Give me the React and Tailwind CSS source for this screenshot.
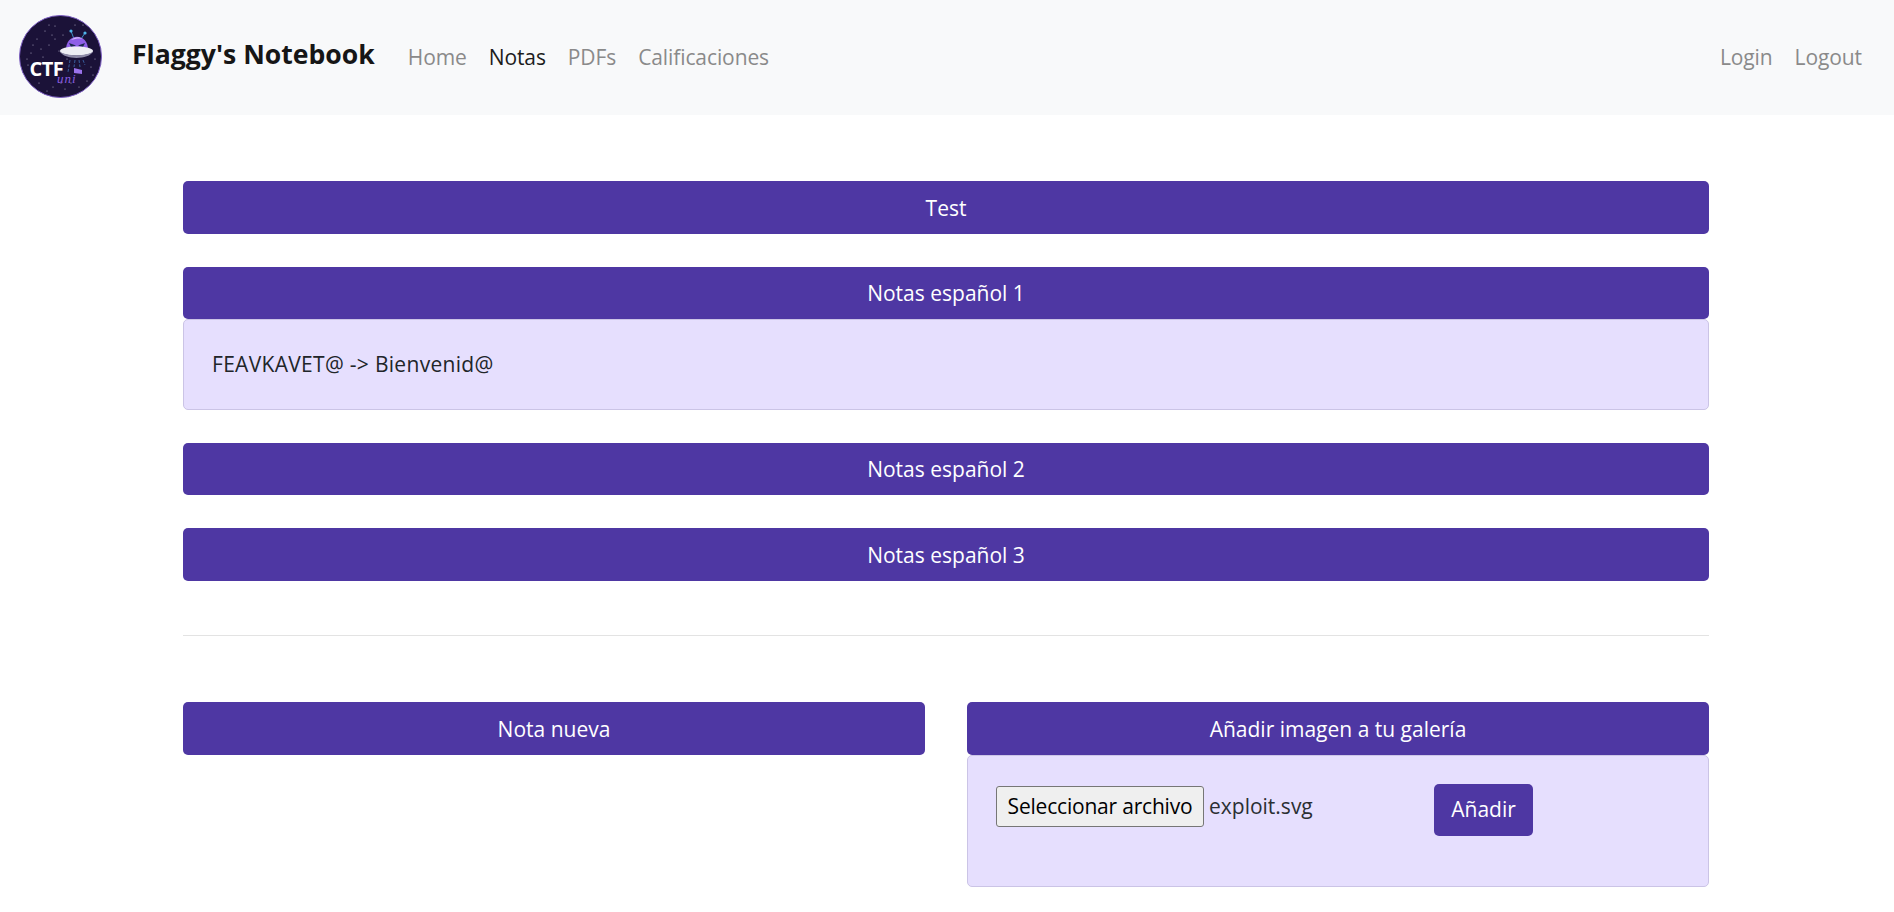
import React from 'react'

const FONT = "font-['Open_Sans','Liberation_Sans',sans-serif]"

// Dotted night sky for the logo
const STARS = [
  [18, 24], [26, 16], [36, 11], [44, 20], [12, 38], [30, 30], [40, 36], [56, 10], [9, 50], [24, 42],
  [36, 24], [20, 68], [72, 52], [68, 66], [33, 20], [60, 72], [46, 74], [34, 72], [76, 44], [28, 76],
  [14, 30], [22, 34], [48, 44], [16, 60], [42, 68], [52, 68], [74, 60], [64, 10], [8, 44], [30, 10],
]

function Logo() {
  return (
    <svg width="83" height="83" viewBox="0 0 83 83" className="shrink-0 mb-[3px]">
      <circle cx="41.5" cy="41.5" r="41" fill="#1b1238" stroke="#7a5cc0" strokeWidth="1" />
      {STARS.map(([x, y]) => (
        <circle key={`${x}-${y}`} cx={x} cy={y} r="0.5" fill="#c9c4e0" />
      ))}
      <path d="M55 24 L52 16 M62 24 L66 18" stroke="#3f8fc4" strokeWidth="1" />
      <circle cx="52" cy="16" r="1.6" fill="#4fb4e8" />
      <circle cx="66" cy="18" r="1.6" fill="#4fb4e8" />
      <path d="M47 36 C46 17 70 17 69 36 Z" fill="#8f5fe8" />
      <path d="M52 25 C55 22 60 21 64 24 C60 23 56 24 52 25 Z" fill="#d2bdf8" />
      <path d="M50 28 l7 2.5 l-5 1.5 Z M66 28 l-7 2.5 l5 1.5 Z" fill="#1c2a50" />
      <ellipse cx="57.5" cy="36" rx="16.5" ry="4.6" fill="#eeeef4" />
      <path d="M41 36.5 C47 41.5 68 41.5 74 36.5 C70 45 45 45 41 36.5 Z" fill="#8f8ba8" />
      <path d="M51 45 L49 57 M56 45 L55 52 M60 45 L61 52 M64 45 L66 50" stroke="#3f74b8" strokeWidth="0.8" strokeDasharray="3 1.5" />
      <path d="M55 53 L63 55 L63 59 L55 58 Z" fill="#9a72ea" />
      <text x="10.5" y="61" fontFamily="Open Sans, sans-serif" fontWeight="700" fontSize="20" letterSpacing="-0.6" fill="#ffffff">CTF</text>
      <text x="38" y="68" fontFamily="Liberation Serif, serif" fontStyle="italic" fontSize="13" letterSpacing="1" fill="#8a5ce0">uni</text>
    </svg>
  )
}

function NavLink({ children, active = false }) {
  return (
    <a className={`px-[11px] text-[21px] leading-[30px] tracking-[-0.1px] ${active ? 'text-[#1c1c1c]' : 'text-[#8a8a8a]'}`}>
      {children}
    </a>
  )
}

function Header({ children }) {
  return (
    <div className="h-[52.5px] pt-[2px] flex items-center justify-center bg-[#4e37a3] rounded-[5px] text-white text-[21px]">
      {children}
    </div>
  )
}

function Body({ className = '', children }) {
  return (
    <div className={`bg-[#e6dffe] border border-[#cbc4e6] rounded-[5px] pl-[28px] ${className}`}>
      {children}
    </div>
  )
}

export default function App() {
  return (
    <div className={`h-[912px] overflow-hidden bg-white text-[#212529] ${FONT}`}>
      <nav className="h-[115px] bg-[#f8f9fa] flex items-center pl-[19px] pr-[21px]">
        <Logo />
        <span className="ml-[30px] mr-[22px] mb-[6px] text-[26.6px] font-bold text-[#161616]">Flaggy's Notebook</span>
        <div className="flex mb-[1px]">
          <NavLink>Home</NavLink>
          <NavLink active>Notas</NavLink>
          <NavLink>PDFs</NavLink>
          <NavLink>Calificaciones</NavLink>
        </div>
        <div className="flex ml-auto mb-[1px]">
          <NavLink>Login</NavLink>
          <NavLink>Logout</NavLink>
        </div>
      </nav>

      <main className="pl-[183px] pr-[185px] pt-[66px]">
        <div className="flex flex-col gap-[33px]">
          <Header>Test</Header>
          <div>
            <Header>Notas español 1</Header>
            <Body className="h-[90.5px] flex items-center text-[21px] tracking-[0.3px]">FEAVKAVET@ -&gt; Bienvenid@</Body>
          </div>
          <Header>Notas español 2</Header>
          <Header>Notas español 3</Header>
        </div>

        <hr className="mt-[54.5px] mb-[66px] border-t border-[#e3e3e3]" />

        <div className="grid grid-cols-2 gap-[42px]">
          <Header>Nota nueva</Header>
          <div>
            <Header>Añadir imagen a tu galería</Header>
            <Body className="h-[132px] pt-[28px]">
              <div className="flex items-start">
                <button className="mt-[2px] pt-[2px] w-[208px] h-[41px] bg-[#efefef] border border-[#767676] rounded-[3px] text-[21px] tracking-[-0.2px] text-black">
                  Seleccionar archivo
                </button>
                <span className="ml-[5px] mt-[2px] w-[225px] text-[21px] leading-[41px] text-[#2b2f33]">exploit.svg</span>
                <button className="w-[99px] h-[52px] pt-[1px] bg-[#4e37a3] rounded-[5px] text-white text-[21px]">
                  Añadir
                </button>
              </div>
            </Body>
          </div>
        </div>
      </main>
    </div>
  )
}
